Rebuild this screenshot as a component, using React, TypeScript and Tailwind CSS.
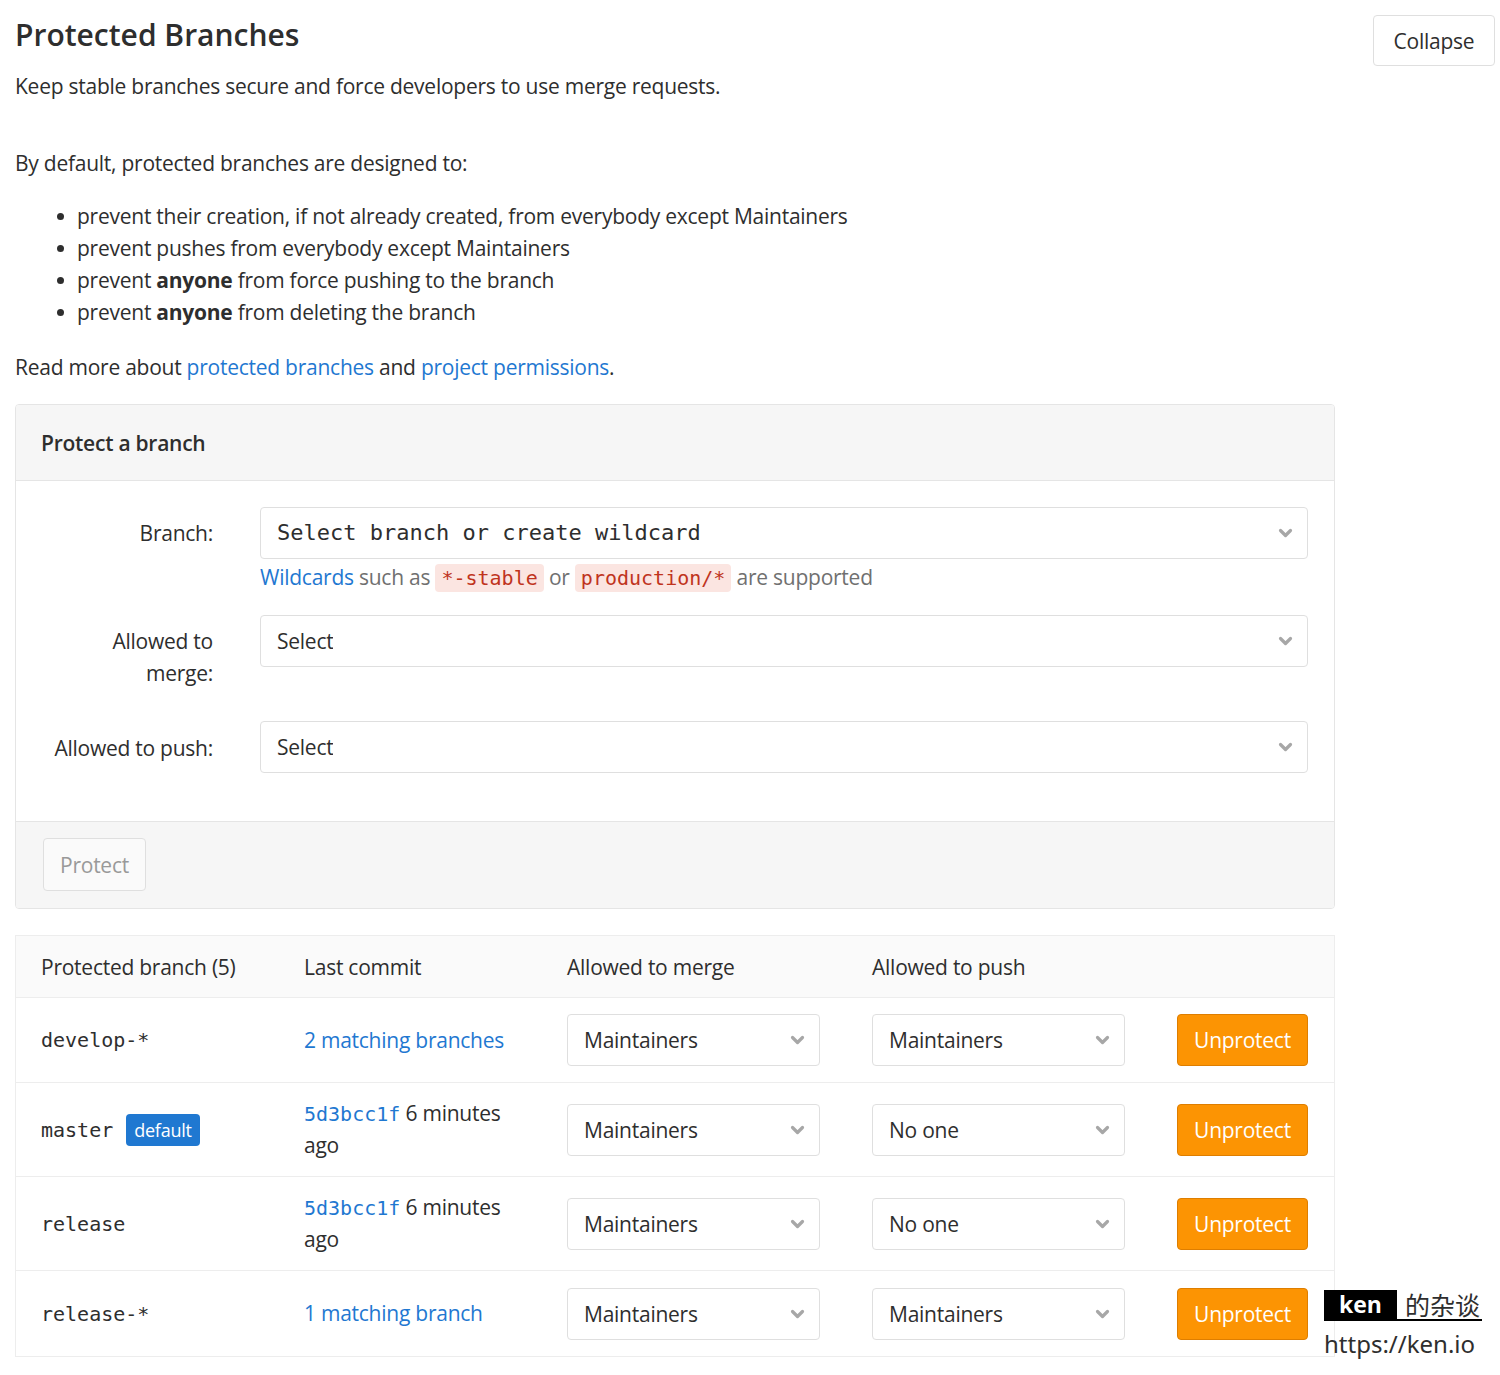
import { ReactNode } from "react";

const sans = "font-['Open_Sans','Noto_Sans',sans-serif]";
const mono = "font-['DejaVu_Sans_Mono','Liberation_Mono',monospace] tracking-normal";

const Chevron = () => (
  <svg width="15" height="10" viewBox="0 0 15 10" className="shrink-0">
    <path d="M2.5 2.5l5 5 5-5" fill="none" stroke="#a7a7a7" strokeWidth="3.2" strokeLinecap="round" strokeLinejoin="round" />
  </svg>
);

const SelectBox = ({ children, className = "" }: { children: ReactNode; className?: string }) => (
  <div
    className={`flex items-center justify-between h-[52px] pl-[16px] pr-[14px] bg-white border border-[#dfdfdf] rounded-[4px] ${className}`}
  >
    <span className="truncate">{children}</span>
    <Chevron />
  </div>
);

const Code = ({ children }: { children: ReactNode }) => (
  <code className={`${mono} text-[20px] text-[#c0341d] bg-[#fbe5e1] rounded-[4px] px-[6px] py-[2px]`}>{children}</code>
);

const Bullet = ({ children }: { children: ReactNode }) => (
  <li className="flex items-center h-[32px]">
    <span className="w-[7px] h-[7px] rounded-full bg-[#2e2e2e] ml-[42px] mr-[13px]" />
    <span>{children}</span>
  </li>
);

// commit sha + relative time, split over two lines like the narrow column does
const CommitAgo = () => (
  <>
    <span className="block">
      <a className={`${mono} text-[20px] text-[#1f78d1]`}>5d3bcc1f</a> 6 minutes
    </span>
    <span className="block">ago</span>
  </>
);

type Row = {
  name: string;
  isDefault?: boolean;
  commit: ReactNode;
  merge: string;
  push: string;
  tall?: boolean;
};

const rows: Row[] = [
  { name: "develop-*", commit: <a className="text-[#1f78d1]">2 matching branches</a>, merge: "Maintainers", push: "Maintainers" },
  { name: "master", isDefault: true, commit: <CommitAgo />, merge: "Maintainers", push: "No one", tall: true },
  { name: "release", commit: <CommitAgo />, merge: "Maintainers", push: "No one", tall: true },
  { name: "release-*", commit: <a className="text-[#1f78d1]">1 matching branch</a>, merge: "Maintainers", push: "Maintainers" },
];

export default function App() {
  return (
    <div
      className={`${sans} relative min-h-[1375px] bg-white text-[#2e2e2e] text-[21px] leading-[32px] tracking-[-0.25px] pl-[15px] pr-[5px] pt-[15px]`}
    >
      {/* Section header */}
      <div className="flex justify-between items-start">
        <div>
          <h2 className="text-[30px] leading-[40px] font-semibold tracking-normal">Protected Branches</h2>
          <p className="mt-[15px]">Keep stable branches secure and force developers to use merge requests.</p>
        </div>
        <button className="w-[122px] h-[51px] border border-[#dfdfdf] rounded-[4px] bg-white text-[21px]">Collapse</button>
      </div>

      <div className="w-[1320px]">
        <p className="mt-[45px]">By default, protected branches are designed to:</p>
        <ul className="mt-[21px]">
          <Bullet>prevent their creation, if not already created, from everybody except Maintainers</Bullet>
          <Bullet>prevent pushes from everybody except Maintainers</Bullet>
          <Bullet>
            prevent <b className="font-bold">anyone</b> from force pushing to the branch
          </Bullet>
          <Bullet>
            prevent <b className="font-bold">anyone</b> from deleting the branch
          </Bullet>
        </ul>
        <p className="mt-[23px]">
          Read more about <a className="text-[#1f78d1]">protected branches</a> and{" "}
          <a className="text-[#1f78d1]">project permissions</a>.
        </p>

        {/* Protect a branch form */}
        <div className="mt-[21px] border border-[#e5e5e5] rounded-[4px] overflow-hidden">
          <div className="h-[76px] flex items-center px-[25px] bg-[#f6f6f6] border-b border-[#e5e5e5] font-semibold">
            Protect a branch
          </div>
          <div className="pt-[26px] pb-[47px] pr-[26px]">
            <div className="grid grid-cols-[197px_1fr] gap-x-[47px]">
              <label className="text-right h-[52px] flex items-center justify-end">Branch:</label>
              <div>
                <SelectBox className={`${mono} text-[22px]`}>Select branch or create wildcard</SelectBox>
                <p className="mt-[2px] h-[54px] text-[#707070]">
                  <a className="text-[#1f78d1]">Wildcards</a> such as <Code>*-stable</Code> or <Code>production/*</Code> are
                  supported
                </p>
              </div>

              <label className="text-right pt-[10px] h-[106px]">
                Allowed to
                <br />
                merge:
              </label>
              <div>
                <SelectBox>Select</SelectBox>
              </div>

              <label className="text-right h-[53px] flex items-center justify-end">Allowed to push:</label>
              <div>
                <SelectBox>Select</SelectBox>
              </div>
            </div>
          </div>
          <div className="h-[87px] bg-[#f6f6f6] border-t border-[#e5e5e5] pt-[16px] pl-[27px]">
            <button className="w-[103px] h-[53px] border border-[#dfdfdf] rounded-[4px] bg-[#fafafa] text-[#999]">
              Protect
            </button>
          </div>
        </div>

        {/* Protected branches table */}
        <div className="mt-[26px] border border-[#ededed]">
          <div className="grid grid-cols-[263px_263px_305px_305px_1fr] h-[62px] items-center bg-[#fafafa] border-b border-[#ededed]">
            <div className="pl-[25px]">Protected branch (5)</div>
            <div className="pl-[25px]">Last commit</div>
            <div className="pl-[25px]">Allowed to merge</div>
            <div className="pl-[25px]">Allowed to push</div>
            <div />
          </div>
          {rows.map((r, i) => (
            <div
              key={r.name}
              className={`grid grid-cols-[263px_263px_305px_305px_1fr] items-center ${r.tall ? "h-[94px]" : "h-[85px]"} ${
                i < rows.length - 1 ? "border-b border-[#ededed]" : ""
              }`}
            >
              <div className="pl-[25px] flex items-center gap-[13px]">
                <span className={`${mono} text-[20px]`}>{r.name}</span>
                {r.isDefault && (
                  <span className="h-[32px] px-[8px] flex items-center rounded-[4px] bg-[#1f78d1] text-white text-[18px]">
                    default
                  </span>
                )}
              </div>
              <div className="pl-[25px] leading-[31px]">{r.commit}</div>
              <div className="pl-[25px]">
                <SelectBox className="w-[253px]">{r.merge}</SelectBox>
              </div>
              <div className="pl-[25px]">
                <SelectBox className="w-[253px]">{r.push}</SelectBox>
              </div>
              <div className="pl-[25px] pr-[26px]">
                <button className="w-[131px] h-[52px] rounded-[4px] bg-[#fc9403] border border-[#de7e00] text-white">
                  Unprotect
                </button>
              </div>
            </div>
          ))}
        </div>
      </div>

      {/* Watermark */}
      <div className="absolute left-[1324px] top-[1290px] tracking-normal">
        <div className="flex items-end border-b-2 border-black w-[158px]">
          <span className="bg-black text-white font-bold text-[23px] leading-[29px] px-[15px]">ken</span>
          <span className="ml-[8px] text-[25px] leading-[29px] font-['Noto_Sans_CJK_SC',sans-serif]">的杂谈</span>
        </div>
        <div className="mt-[7px] text-[24px] leading-[32px] font-['Noto_Sans',sans-serif]">https://ken.io</div>
      </div>
    </div>
  );
}
